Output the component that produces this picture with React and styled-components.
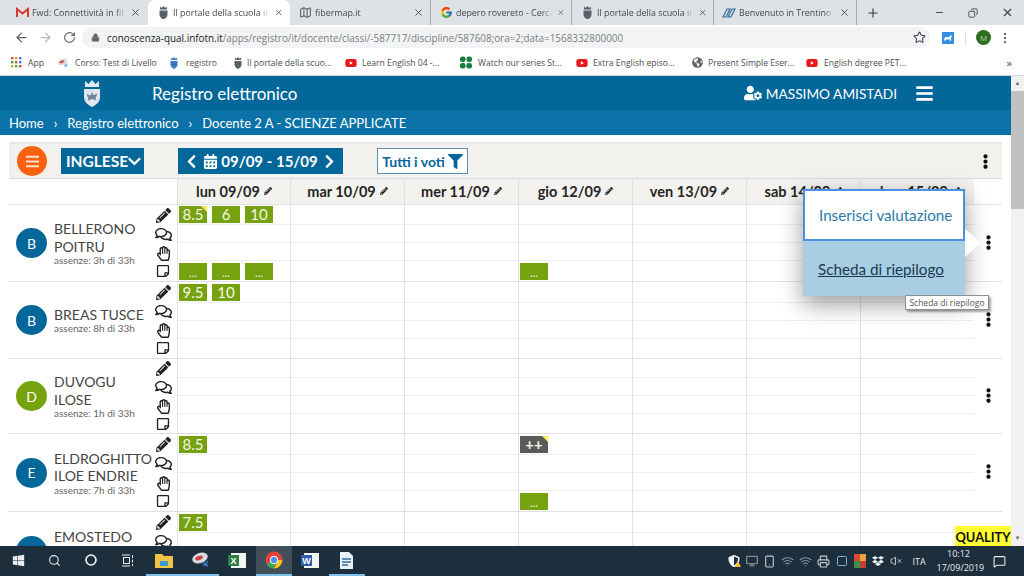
import React from 'react'
import styled, { createGlobalStyle } from 'styled-components'
import {
	FaBars,
	FaCalendarAlt,
	FaChevronDown,
	FaChevronLeft,
	FaChevronRight,
	FaDesktop,
	FaDropbox,
	FaEllipsisV,
	FaFilter,
	FaGlobeAmericas,
	FaPencilAlt,
	FaRegComments,
	FaRegHandPaper,
	FaRegStickyNote,
	FaShieldAlt,
	FaUserCog,
	FaWindows,
	FaYoutube
} from 'react-icons/fa'
import { FcGoogle } from 'react-icons/fc'
import {
	ArrowLeft,
	ArrowRight,
	Copy,
	EllipsisVertical,
	Lock,
	Map,
	MessageSquare,
	Minus,
	Plus,
	Printer,
	RotateCw,
	Search,
	Smartphone,
	Square,
	Star,
	VolumeX,
	Wifi,
	X
} from 'lucide-react'

const BLUE = '#04679a'
const GREEN = '#76a20f'
const UI_FONT = '"Open Sans", "Liberation Sans", sans-serif'
const PAGE_FONT = 'Lato, "Open Sans", sans-serif'
const COLUMNS = '168px 113px repeat(6, 114px) 28px'

const Global = createGlobalStyle`
	html, body {
		margin: 0;
		height: 100%;
		overflow: hidden;
		background: #fff;
	}
	* {
		box-sizing: border-box;
	}
`

const Screen = styled.div`
	width: 1024px;
	height: 576px;
	display: flex;
	flex-direction: column;
	overflow: hidden;
	font-family: ${UI_FONT};
`

/* browser tabs */
const TabStrip = styled.div`
	height: 25px;
	flex: none;
	display: flex;
	align-items: flex-end;
	padding-left: 7px;
	background: #dee1e6;
`

const Tab = styled.div`
	width: ${props => props.$width}px;
	height: 25px;
	display: flex;
	align-items: center;
	padding: 0 6px 0 8px;
	gap: 3px;
	font-size: 8.9px;
	color: #45484d;
	border-right: 1px solid ${props => (props.$divider ? '#a9acb1' : 'transparent')};
	background: ${props => (props.$active ? '#fff' : 'transparent')};
	border-radius: ${props => (props.$active ? '7px 7px 0 0' : '0')};
`

const TabIcon = styled.span`
	width: 14px;
	height: 14px;
	flex: none;
	display: flex;
	align-items: center;
	justify-content: center;
	color: #5f6368;
`

const TabTitle = styled.span`
	flex: 1;
	white-space: nowrap;
	-webkit-mask-image: linear-gradient(to right, #000 88%, transparent 98%);
	mask-image: linear-gradient(to right, #000 88%, transparent 98%);
`

const NewTab = styled.div`
	width: 32px;
	display: flex;
	justify-content: center;
	align-self: center;
	color: #3c4043;
`

const WindowControls = styled.div`
	margin-left: auto;
	height: 25px;
	display: flex;
	align-items: center;
	color: #3c4043;
`

const WindowButton = styled.div`
	width: 34px;
	display: flex;
	justify-content: center;
`

const RestoreIcon = styled(Copy)`
	transform: scaleX(-1);
`

/* address bar */
const AddressRow = styled.div`
	height: 25px;
	flex: none;
	display: flex;
	align-items: center;
	padding-left: 9px;
	background: #fff;
	color: #5f6368;
`

const NavButton = styled.div`
	width: 24px;
	display: flex;
	justify-content: center;
	color: ${props => (props.$disabled ? '#b9bbbe' : '#5f6368')};
`

const Omnibox = styled.div`
	width: 848px;
	height: 21px;
	margin-left: 1px;
	padding: 0 4px 0 9px;
	display: flex;
	align-items: center;
	gap: 7px;
	border-radius: 11px;
	background: #f1f3f4;
	font-size: 9.9px;
	color: #7b7e82;
`

const Host = styled.span`
	color: #202124;
`

const StarSlot = styled.div`
	margin-left: auto;
	display: flex;
	color: #45484d;
`

const ExtensionBadge = styled.div`
	width: 12px;
	height: 12px;
	margin-left: 12px;
	display: flex;
	background: #2f8de4;
	border-radius: 1px;
`

const ToolDivider = styled.div`
	width: 1px;
	height: 14px;
	margin: 0 10px 0 11px;
	background: #dadce0;
`

const Profile = styled.div`
	width: 15px;
	height: 15px;
	border-radius: 50%;
	background: #2e6b1f;
	color: #b9d8a8;
	font-size: 8px;
	display: flex;
	align-items: center;
	justify-content: center;
`

const MenuSlot = styled.div`
	margin-left: 7px;
	display: flex;
`

/* bookmarks */
const BookmarkRow = styled.div`
	height: 26px;
	flex: none;
	display: flex;
	align-items: center;
	padding-left: 10px;
	background: #fff;
	border-bottom: 1px solid #d5d7da;
	font-size: 8.6px;
	color: #4b4e52;
`

const Bookmark = styled.div`
	width: ${props => props.$width}px;
	flex: none;
	display: flex;
	align-items: center;
	gap: ${props => props.$gap || 6}px;
	white-space: nowrap;
`

const BookmarkIcon = styled.span`
	width: 12px;
	height: 12px;
	flex: none;
	display: flex;
	align-items: center;
	justify-content: center;
`

const More = styled.div`
	margin-left: auto;
	padding-right: 12px;
	font-size: 11px;
`

/* page */
const PageArea = styled.div`
	flex: 1;
	min-height: 0;
	display: flex;
`

const Viewport = styled.main`
	position: relative;
	width: 1011px;
	overflow: hidden;
	font-family: ${PAGE_FONT};
`

const Scrollbar = styled.div`
	width: 13px;
	display: flex;
	flex-direction: column;
	align-items: center;
	background: #f1f1f1;
	font-size: 6px;
	color: #6a6a6a;
`

const ScrollArrow = styled.div`
	height: 15px;
	line-height: 15px;
`

const ScrollThumb = styled.div`
	width: 100%;
	height: 118px;
	background: #c1c1c1;
`

const ScrollSpace = styled.div`
	flex: 1;
`

const Header = styled.header`
	height: 34px;
	display: flex;
	align-items: center;
	padding: 0 77px 0 83px;
	background: ${BLUE};
	color: #fff;
`

const Title = styled.h1`
	margin: 0 0 0 51px;
	font-size: 17px;
	font-weight: 400;
`

const UserBox = styled.div`
	margin-left: auto;
	display: flex;
	align-items: center;
	gap: 4px;
	font-size: 13.7px;
`

const BurgerSlot = styled.div`
	margin-left: 14px;
	display: flex;
`

const Breadcrumb = styled.nav`
	height: 25px;
	display: flex;
	align-items: center;
	gap: 10px;
	padding-left: 9px;
	background: #0b72a8;
	color: #fff;
	font-size: 13px;
`

const Content = styled.div`
	padding: 7px 9px 0;
`

const Toolbar = styled.div`
	height: 36px;
	display: flex;
	align-items: center;
	padding-left: 8px;
	background: #f2f1ed;
	border-top: 2px solid #e6e6ea;
`

const RoundMenu = styled.div`
	width: 30px;
	height: 30px;
	margin-right: 14px;
	border-radius: 50%;
	background: #f8620e;
	color: #fde0cf;
	display: flex;
	align-items: center;
	justify-content: center;
`

const BlueButton = styled.div`
	height: 26px;
	margin-right: ${props => props.$after}px;
	padding: 0 ${props => props.$pad}px;
	width: ${props => props.$width}px;
	display: flex;
	align-items: center;
	justify-content: space-between;
	background: ${BLUE};
	color: #fff;
	font-size: 15px;
	font-weight: 700;
`

const SubjectLabel = styled.span`
	margin-left: 2px;
	font-size: 15.5px;
`

const WeekLabel = styled.span`
	display: flex;
	align-items: center;
	gap: 3px;
`

const FilterButton = styled.div`
	width: 91px;
	height: 26px;
	display: flex;
	align-items: center;
	justify-content: center;
	gap: 3px;
	background: #fff;
	border: 1px solid #5a8fae;
	color: ${BLUE};
	font-size: 14px;
	font-weight: 700;
`

const DotsSlot = styled.div`
	margin-left: ${props => (props.$auto ? 'auto' : '0')};
	padding-right: ${props => props.$right || 0}px;
	display: flex;
	align-items: center;
	justify-content: center;
	color: #111;
`

const DayHeader = styled.div`
	height: 27px;
	display: grid;
	grid-template-columns: ${COLUMNS};
	border-top: 1px solid #dcdcdc;
	border-bottom: 1px solid #e2e2e2;
`

const DayTitle = styled.div`
	display: flex;
	align-items: center;
	justify-content: center;
	gap: 4px;
	padding-bottom: 1px;
	background: #f3f2ee;
	border-left: 1px solid #e0e0e0;
	font-size: 14.5px;
	font-weight: 700;
	color: #252525;
`

const Row = styled.section`
	display: grid;
	grid-template-columns: ${COLUMNS};
	border-bottom: 1px solid #e0e0e0;
`

const Student = styled.div`
	display: flex;
	align-items: center;
	padding-left: 7px;
`

const Avatar = styled.div`
	width: 31px;
	height: 30px;
	flex: none;
	margin-right: 7px;
	border-radius: 50%;
	background: ${props => props.$color};
	color: #fff;
	font-size: 14px;
	display: flex;
	align-items: center;
	justify-content: center;
`

const Names = styled.div`
	flex: 1;
	min-width: 0;
`

const NameLine = styled.div`
	font-size: 14px;
	line-height: 17.5px;
	color: #444;
	white-space: nowrap;
`

const Absences = styled.div`
	font-size: 10px;
	line-height: 11px;
	color: #666;
	white-space: nowrap;
`

const Actions = styled.div`
	width: 23px;
	flex: none;
	display: flex;
	flex-direction: column;
	align-items: center;
	justify-content: space-around;
	padding: 1px 5px 1px 0;
	align-self: stretch;
	color: #222;
`

const DayCell = styled.div`
	display: grid;
	grid-template-rows: ${props => props.$rows};
	border-left: 1px solid #e4e4e4;
`

const Slot = styled.div`
	display: flex;
	align-items: flex-end;
	gap: 5px;
	padding: 0 0 1px 1px;
	border-bottom: ${props => (props.$last ? 'none' : '1px solid #eee')};
`

const Mark = styled.div`
	position: relative;
	width: 28px;
	height: 17px;
	display: flex;
	align-items: ${props => (props.$small ? 'flex-end' : 'center')};
	justify-content: center;
	background: ${props => (props.$plain ? '#5a5a5a' : GREEN)};
	color: #f4f7e6;
	font-size: ${props => (props.$small ? '11px' : '15px')};
	font-weight: ${props => (props.$plain ? 700 : 400)};
	line-height: ${props => (props.$small ? '14px' : '17px')};

	&::after {
		content: '';
		display: ${props => (props.$noted ? 'block' : 'none')};
		position: absolute;
		top: 0;
		right: 0;
		border-style: solid;
		border-width: 0 6px 6px 0;
		border-color: transparent #f1ee5a transparent transparent;
	}
`

const RowMenu = styled.div`
	display: flex;
	align-items: center;
	justify-content: center;
	padding-bottom: 2px;
	color: #111;
`

/* open row menu */
const Popup = styled.div`
	position: absolute;
	left: 803px;
	top: 113px;
	width: 162px;
	box-shadow: 0 8px 22px rgba(0, 0, 0, 0.4);
	font-size: 15.2px;
`

const PopupArrow = styled.div`
	position: absolute;
	left: 162px;
	top: 40px;
	border-style: solid;
	border-width: 14px 0 14px 16px;
	border-color: transparent transparent transparent #fff;
`

const PopupItem = styled.div`
	height: ${props => (props.$focused ? 52 : 55)}px;
	display: flex;
	align-items: center;
	padding-left: ${props => (props.$focused ? 14 : 15)}px;
	background: ${props => (props.$focused ? '#fff' : '#a9cee3')};
	border: ${props => (props.$focused ? '2px solid #4a8fe0' : 'none')};
	color: ${props => (props.$focused ? '#2a7ba6' : '#173b52')};
	text-decoration: ${props => (props.$focused ? 'none' : 'underline')};
`

const Tooltip = styled.div`
	position: absolute;
	left: 905px;
	top: 219px;
	width: 84px;
	height: 15px;
	line-height: 13px;
	text-align: center;
	background: #fff;
	border: 1px solid #8e8e8e;
	box-shadow: 2px 2px 2px rgba(0, 0, 0, 0.35);
	font-family: ${UI_FONT};
	font-size: 8.5px;
	color: #555;
`

const QualityBadge = styled.div`
	position: absolute;
	left: 955px;
	bottom: 0;
	width: 56px;
	height: 20px;
	line-height: 22px;
	text-align: center;
	background: #ffff33;
	color: #111;
	font-size: 12.8px;
	font-weight: 700;
`

/* windows taskbar */
const Taskbar = styled.footer`
	height: 30px;
	flex: none;
	display: flex;
	align-items: stretch;
	background: #1d2e3c;
	color: #e8ecef;
`

const TaskSlot = styled.div`
	width: 36.5px;
	display: flex;
	align-items: center;
	justify-content: center;
	background: ${props => (props.$active ? '#414f5a' : 'transparent')};
	border-bottom: 2px solid ${props => (props.$running ? '#7fbfec' : 'transparent')};
`

const Tray = styled.div`
	margin-left: auto;
	display: flex;
	align-items: center;
	padding-right: 18px;
	font-size: 9px;
`

const TrayIcon = styled.div`
	position: relative;
	width: 18px;
	display: flex;
	justify-content: center;
	color: ${props => props.$color || '#c3cad0'};
`

const WarningBadge = styled.span`
	position: absolute;
	right: 2px;
	bottom: 0;
	border-style: solid;
	border-width: 0 3px 6px 3px;
	border-color: transparent transparent #f2c230 transparent;
`

const Language = styled.div`
	margin-left: 8px;
	width: 24px;
`

const Clock = styled.div`
	width: 44px;
	margin-right: 12.5px;
	text-align: center;
	line-height: 14px;
`

const Crest = ({ size = 18, color = '#dfe8ee' }) => (
	<svg width={size} height={size * 1.5} viewBox="0 0 18 27">
		<path d="M2 1l3.5 3L9 0l3.5 4L16 1v6H2z" fill={color} />
		<path d="M1 9h16v8c0 5-4 8-8 10-4-2-8-5-8-10z" fill={color} />
		<path d="M9 12l1.5 3 4-1.5-2 5 1 2-4.5-1.5L4.500 21l1-2-2-5 4 1.500z" fill="#3d5f73" opacity="0.7" />
	</svg>
)

const Gmail = () => (
	<svg width="13" height="11" viewBox="0 0 13 11">
		<path d="M1 10V2l5.500 4.500L12 2v8" fill="none" stroke="#d8392d" strokeWidth="2" />
	</svg>
)

const Trentino = () => (
	<svg width="14" height="12" viewBox="0 0 14 12">
		<path d="M1 10l4-8h3L4 10zM6 10l4-8h3l-4 8z" fill="none" stroke="#2f6f9f" strokeWidth="1.2" />
	</svg>
)

const AppsGrid = () => (
	<svg width="11" height="11" viewBox="0 0 11 11">
		{['#d84a38', '#e3a21a', '#3b78e7', '#3aa757', '#d84a38', '#3b78e7', '#e3a21a', '#3aa757', '#d84a38'].map((c, i) => (
			<rect key={i} x={(i % 3) * 4} y={Math.floor(i / 3) * 4} width="2.4" height="2.4" fill={c} />
		))}
	</svg>
)

const Clover = () => (
	<svg width="13" height="13" viewBox="0 0 13 13" fill="#12803c">
		<rect x="0" y="0" width="6" height="6" rx="2.5" />
		<rect x="7" y="0" width="6" height="6" rx="2.5" />
		<rect x="0" y="7" width="6" height="6" rx="2.5" />
		<rect x="7" y="7" width="6" height="6" rx="2.5" />
	</svg>
)

const Chrome = () => (
	<svg width="18" height="18" viewBox="0 0 18 18">
		<circle cx="9" cy="9" r="8.500" fill="#e2463a" />
		<path d="M9 9L1.600 13.300A8.500 8.500 0 0 0 9 17.500L13 9z" fill="#3aa757" />
		<path d="M9 9h8.300A8.500 8.500 0 0 1 9 17.500L13 10z" fill="#f5c518" />
		<circle cx="9" cy="9" r="4" fill="#fff" />
		<circle cx="9" cy="9" r="3.100" fill="#4a8bf0" />
	</svg>
)

const Folder = () => (
	<svg width="18" height="16" viewBox="0 0 18 16">
		<path d="M0 2h7l2 2h9v12H0z" fill="#f3c443" />
		<rect x="5" y="9" width="8" height="5" fill="#3a9ad9" />
	</svg>
)

const Disc = () => (
	<svg width="20" height="16" viewBox="0 0 20 16">
		<ellipse cx="9" cy="6" rx="8" ry="5" fill="#d9d9e0" transform="rotate(-20 9 6)" />
		<ellipse cx="8" cy="6" rx="4" ry="2" fill="#c8483f" transform="rotate(-20 8 6)" />
		<path d="M12 11l5 3M17 9l-4 5" stroke="#3a7fd0" strokeWidth="1.500" />
	</svg>
)

const DogBadge = () => (
	<svg width="12" height="12" viewBox="0 0 12 12">
		<path d="M2 8l1-3h4l2-2 1 1-1 2v3H8V7.500H4L3 9z" fill="#fff" />
	</svg>
)

const OfficeDoc = ({ fill, letter }) => (
	<svg width="18" height="17" viewBox="0 0 18 17">
		<rect x="3" y="1" width="15" height="15" fill="#f2f5f0" />
		<rect x="0" y="3" width="11" height="11" fill={fill} />
		<text x="5.500" y="12" fontSize="9" fontWeight="700" textAnchor="middle" fill="#fff" fontFamily="Liberation Sans, sans-serif">
			{letter}
		</text>
	</svg>
)

const NoteDoc = () => (
	<svg width="13" height="17" viewBox="0 0 13 17">
		<path d="M0 0h9l4 4v13H0z" fill="#e8f1f8" />
		<path d="M2 7h9M2 10h9M2 13h6" stroke="#2f6f9f" strokeWidth="1.400" />
	</svg>
)

const TaskView = () => (
	<svg width="13" height="13" viewBox="0 0 13 13" fill="none" stroke="#e8ecef">
		<rect x="2.500" y="3.500" width="6" height="6" />
		<path d="M1 1h8M1 12h8M11.500 1v3M11.500 5.500v3M11.500 10v2" />
	</svg>
)

const Ring = () => (
	<svg width="12" height="12" viewBox="0 0 12 12">
		<circle cx="6" cy="6" r="5" fill="none" stroke="#f4f6f7" strokeWidth="1.600" />
	</svg>
)

const ColorTiles = () => (
	<svg width="12" height="14" viewBox="0 0 12 14">
		<rect width="6" height="7" fill="#d9482f" />
		<rect x="6" width="6" height="7" fill="#e8a33a" />
		<rect y="7" width="6" height="7" fill="#3c8f4a" />
		<rect x="6" y="7" width="6" height="7" fill="#c4402f" />
	</svg>
)

const tabs = [
	{ title: 'Fwd: Connettività in fib', icon: <Gmail />, width: 141 },
	{ title: 'Il portale della scuola in', icon: <Crest size={9} color="#5f6368" />, width: 142, active: true },
	{ title: 'fibermap.it', icon: <Map size={13} />, width: 141, divider: true },
	{ title: 'depero rovereto - Cerca', icon: <FcGoogle size={13} />, width: 141, divider: true },
	{ title: 'Il portale della scuola in', icon: <Crest size={9} color="#5f6368" />, width: 142, divider: true },
	{ title: 'Benvenuto in Trentino', icon: <Trentino />, width: 143, divider: true }
]

const Red = () => <FaYoutube size={12} color="#e8191c" />

const bookmarks = [
	{ label: 'App', icon: <AppsGrid />, width: 47 },
	{ label: 'Corso: Test di Livello', icon: <Disc />, width: 111 },
	{ label: 'registro', icon: <Crest size={8} color="#3a7fd0" />, width: 64 },
	{ label: 'Il portale della scuo...', icon: <Crest size={8} color="#5f6368" />, width: 113, gap: 3 },
	{ label: 'Learn English 04 -...', icon: <Red />, width: 115, gap: 5 },
	{ label: 'Watch our series St...', icon: <Clover />, width: 116 },
	{ label: 'Extra English episo...', icon: <Red />, width: 115, gap: 5 },
	{ label: 'Present Simple Eser...', icon: <FaGlobeAmericas size={11} color="#5f6368" />, width: 115, gap: 5 },
	{ label: 'English degree PET...', icon: <Red />, width: 120, gap: 6 }
]

const days = ['lun 09/09', 'mar 10/09', 'mer 11/09', 'gio 12/09', 'ven 13/09', 'sab 14/09', 'dom 15/09']

// marks[day][slot] holds what each student got, slots run top to bottom
const students = [
	{
		initial: 'B',
		color: BLUE,
		names: ['BELLERONO', 'POITRU'],
		absences: 'assenze: 3h di 33h',
		rows: '20px 18px 18px 20px',
		marks: {
			0: { 0: [{ v: '8.5', noted: true }, { v: '6' }, { v: '10' }], 3: [{ v: '...', small: true }, { v: '...', small: true }, { v: '...', small: true }] },
			3: { 3: [{ v: '...', small: true }] }
		}
	},
	{
		initial: 'B',
		color: BLUE,
		names: ['BREAS TUSCE'],
		absences: 'assenze: 8h di 33h',
		rows: '21px 18px 18px 19px',
		marks: { 0: { 0: [{ v: '9.5' }, { v: '10' }] } }
	},
	{
		initial: 'D',
		color: GREEN,
		names: ['DUVOGU', 'ILOSE'],
		absences: 'assenze: 1h di 33h',
		rows: '19px 18px 18px 19px',
		marks: {}
	},
	{
		initial: 'E',
		color: BLUE,
		names: ['ELDROGHITTO', 'ILOE ENDRIE'],
		absences: 'assenze: 7h di 33h',
		rows: '21px 18px 18px 20px',
		marks: {
			0: { 0: [{ v: '8.5' }] },
			3: { 0: [{ v: '++', plain: true, noted: true }], 3: [{ v: '...', small: true }] }
		}
	},
	{
		initial: 'E',
		color: BLUE,
		names: ['EMOSTEDO', '\u00a0'],
		absences: '\u00a0',
		rows: '21px 18px 18px 20px',
		marks: { 0: { 0: [{ v: '7.5' }] } }
	}
]

const SLOTS = [0, 1, 2, 3]

const StudentRow = ({ student }) => (
	<Row>
		<Student>
			<Avatar $color={student.color}>{student.initial}</Avatar>
			<Names>
				{student.names.map((line, i) => (
					<NameLine key={i}>{line}</NameLine>
				))}
				<Absences>{student.absences}</Absences>
			</Names>
			<Actions>
				<FaPencilAlt size={15} />
				<FaRegComments size={17} />
				<FaRegHandPaper size={15} />
				<FaRegStickyNote size={14} />
			</Actions>
		</Student>
		{days.map((day, d) => (
			<DayCell key={day} $rows={student.rows}>
				{SLOTS.map(s => (
					<Slot key={s} $last={s === 3}>
						{((student.marks[d] || {})[s] || []).map((m, i) => (
							<Mark key={i} $small={m.small} $plain={m.plain} $noted={m.noted}>
								{m.v}
							</Mark>
						))}
					</Slot>
				))}
			</DayCell>
		))}
		<RowMenu>
			<FaEllipsisV size={15} />
		</RowMenu>
	</Row>
)

export default function App() {
	return (
		<Screen>
			<Global />
			<TabStrip>
				{tabs.map((tab, i) => (
					<Tab key={i} $width={tab.width} $active={tab.active} $divider={tab.divider}>
						<TabIcon>{tab.icon}</TabIcon>
						<TabTitle>{tab.title}</TabTitle>
						<X size={11} color="#45484d" />
					</Tab>
				))}
				<NewTab>
					<Plus size={14} />
				</NewTab>
				<WindowControls>
					<WindowButton>
						<Minus size={11} />
					</WindowButton>
					<WindowButton>
						<RestoreIcon size={10} />
					</WindowButton>
					<WindowButton>
						<X size={13} />
					</WindowButton>
				</WindowControls>
			</TabStrip>

			<AddressRow>
				<NavButton>
					<ArrowLeft size={15} />
				</NavButton>
				<NavButton $disabled>
					<ArrowRight size={15} />
				</NavButton>
				<NavButton>
					<RotateCw size={13} />
				</NavButton>
				<Omnibox>
					<Lock size={9} fill="#5f6368" />
					<span>
						<Host>conoscenza-qual.infotn.it</Host>/apps/registro/it/docente/classi/-587717/discipline/587608;ora=2;data=1568332800000
					</span>
					<StarSlot>
						<Star size={13} />
					</StarSlot>
				</Omnibox>
				<ExtensionBadge>
					<DogBadge />
				</ExtensionBadge>
				<ToolDivider />
				<Profile>M</Profile>
				<MenuSlot>
					<EllipsisVertical size={14} />
				</MenuSlot>
			</AddressRow>

			<BookmarkRow>
				{bookmarks.map(b => (
					<Bookmark key={b.label} $width={b.width} $gap={b.gap}>
						<BookmarkIcon>{b.icon}</BookmarkIcon>
						{b.label}
					</Bookmark>
				))}
				<More>»</More>
			</BookmarkRow>

			<PageArea>
				<Viewport>
					<Header>
						<Crest />
						<Title>Registro elettronico</Title>
						<UserBox>
							<FaUserCog size={18} />
							MASSIMO AMISTADI
							<BurgerSlot>
								<FaBars size={19} />
							</BurgerSlot>
						</UserBox>
					</Header>
					<Breadcrumb>
						<span>Home</span>
						<span>›</span>
						<span>Registro elettronico</span>
						<span>›</span>
						<span>Docente 2 A - SCIENZE APPLICATE</span>
					</Breadcrumb>
					<Content>
						<Toolbar>
							<RoundMenu>
								<FaBars size={15} />
							</RoundMenu>
							<BlueButton $width={83} $pad={3} $after={34}>
								<SubjectLabel>INGLESE</SubjectLabel>
								<FaChevronDown size={15} />
							</BlueButton>
							<BlueButton $width={165} $pad={6} $after={34}>
								<FaChevronLeft size={15} />
								<WeekLabel>
									<FaCalendarAlt size={15} />
									09/09 - 15/09
								</WeekLabel>
								<FaChevronRight size={15} />
							</BlueButton>
							<FilterButton>
								Tutti i voti
								<FaFilter size={15} />
							</FilterButton>
							<DotsSlot $auto $right={9}>
								<FaEllipsisV size={15} />
							</DotsSlot>
						</Toolbar>
						<DayHeader>
							<div />
							{days.map(day => (
								<DayTitle key={day}>
									{day}
									<FaPencilAlt size={8} />
								</DayTitle>
							))}
						</DayHeader>
						{students.map((student, i) => (
							<StudentRow key={i} student={student} />
						))}
					</Content>
					<Popup>
						<PopupArrow />
						<PopupItem $focused>Inserisci valutazione</PopupItem>
						<PopupItem>Scheda di riepilogo</PopupItem>
					</Popup>
					<Tooltip>Scheda di riepilogo</Tooltip>
					<QualityBadge>QUALITY</QualityBadge>
				</Viewport>
				<Scrollbar>
					<ScrollArrow>▲</ScrollArrow>
					<ScrollThumb />
					<ScrollSpace />
					<ScrollArrow>▼</ScrollArrow>
				</Scrollbar>
			</PageArea>

			<Taskbar>
				<TaskSlot>
					<FaWindows size={13} />
				</TaskSlot>
				<TaskSlot>
					<Search size={13} />
				</TaskSlot>
				<TaskSlot>
					<Ring />
				</TaskSlot>
				<TaskSlot>
					<TaskView />
				</TaskSlot>
				<TaskSlot $running>
					<Folder />
				</TaskSlot>
				<TaskSlot $running>
					<Disc />
				</TaskSlot>
				<TaskSlot>
					<OfficeDoc fill="#2f7d46" letter="X" />
				</TaskSlot>
				<TaskSlot $active $running>
					<Chrome />
				</TaskSlot>
				<TaskSlot>
					<OfficeDoc fill="#2f5ea8" letter="W" />
				</TaskSlot>
				<TaskSlot $running>
					<NoteDoc />
				</TaskSlot>
				<Tray>
					<TrayIcon $color="#f2f4f5">
						<FaShieldAlt size={12} />
						<WarningBadge />
					</TrayIcon>
					<TrayIcon $color="#7d8790">
						<FaDesktop size={12} />
					</TrayIcon>
					<TrayIcon>
						<Smartphone size={13} />
					</TrayIcon>
					<TrayIcon $color="#8b959d">
						<Wifi size={13} />
					</TrayIcon>
					<TrayIcon $color="#8b959d">
						<Wifi size={13} />
					</TrayIcon>
					<TrayIcon>
						<Printer size={13} />
					</TrayIcon>
					<TrayIcon $color="#7fb0d8">
						<Square size={12} />
					</TrayIcon>
					<TrayIcon>
						<ColorTiles />
					</TrayIcon>
					<TrayIcon $color="#f2f4f5">
						<FaDropbox size={12} />
					</TrayIcon>
					<TrayIcon>
						<VolumeX size={12} />
					</TrayIcon>
					<Language>ITA</Language>
					<Clock>
						10:12
						<br />
						17/09/2019
					</Clock>
					<MessageSquare size={13} />
				</Tray>
			</Taskbar>
		</Screen>
	)
}
